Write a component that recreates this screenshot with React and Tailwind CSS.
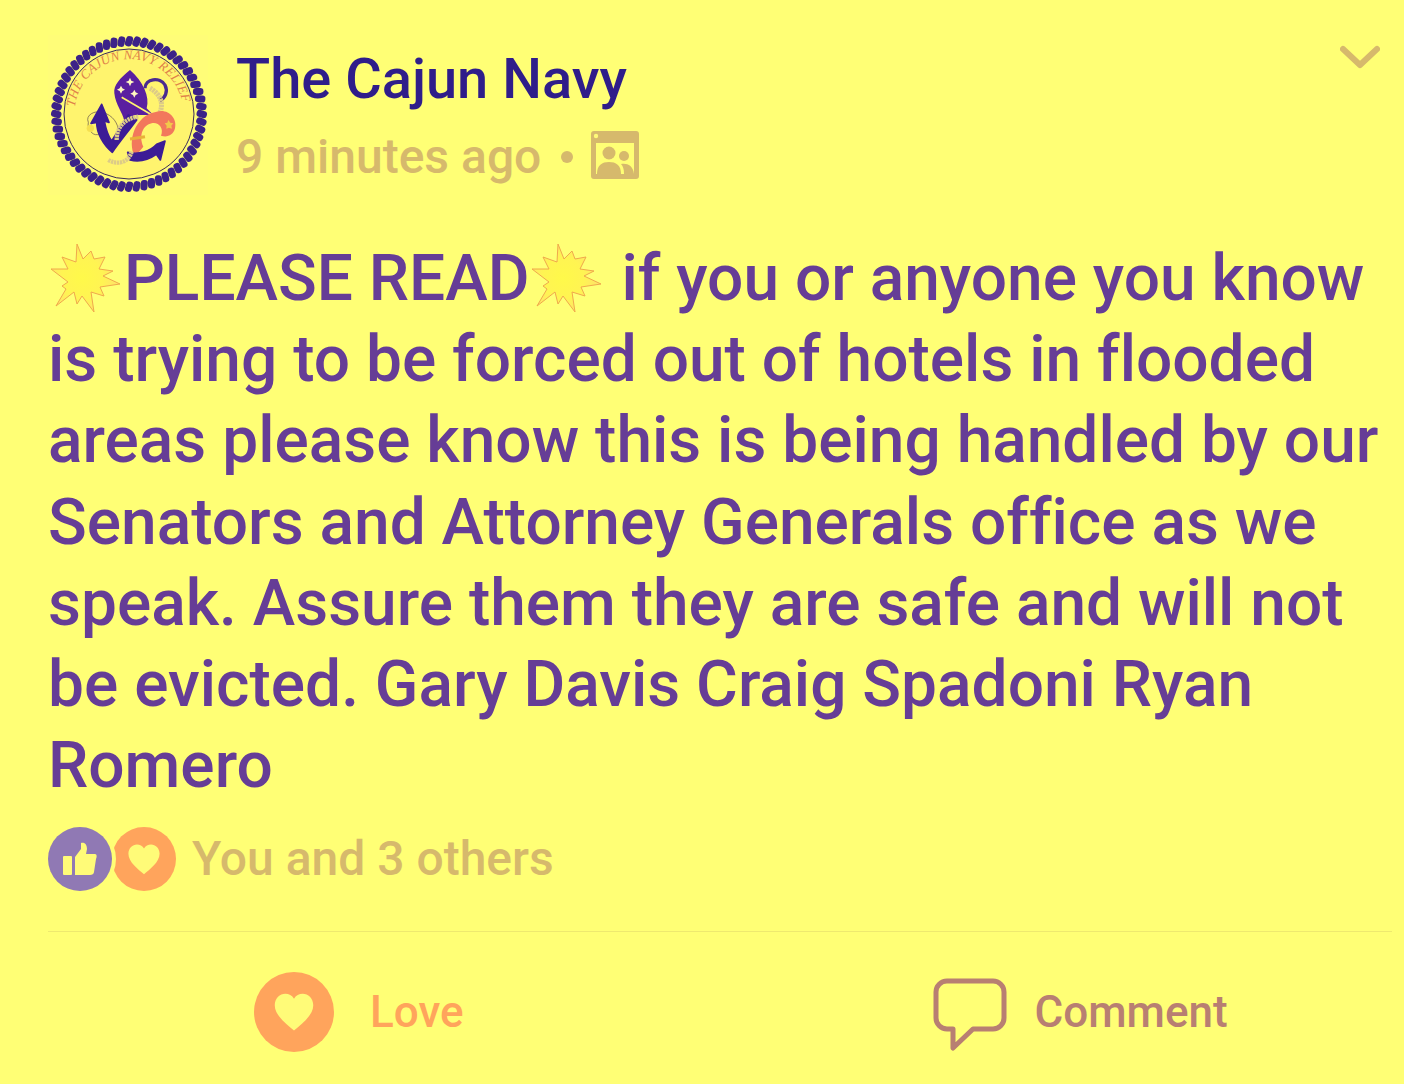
import React from 'react';

const BEADS = Array.from({ length: 60 }, (_, i) => i * 6);

function Logo() {
  return (
    <svg viewBox="0 0 160 160" className="w-[160px] h-[160px] shrink-0">
      <rect width="160" height="160" fill="#fffd78" />
      {BEADS.map((a) => (
        <rect key={a} x="77.5" y="1" width="7" height="10.5" rx="3.2" transform={`rotate(${a} 81 79) rotate(18 81 6.2)`} fill="#3c2288" />
      ))}
      <circle cx="81" cy="79" r="65" fill="#fff46e" stroke="#3a2a5a" strokeWidth="1" />
      <defs>
        <path id="logoArc" d="M 27 86 A 54.5 54.5 0 1 1 135 86" />
      </defs>
      <text fontFamily="'Liberation Serif', serif" fontStyle="italic" fontSize="13" fill="#e0824a" letterSpacing="0.2">
        <textPath href="#logoArc" startOffset="14">THE CAJUN NAVY RELIEF</textPath>
      </text>
      <g transform="translate(37 30) scale(0.3333)">
        <path d="M10 172 C0 150 30 135 52 142 C85 150 100 178 100 198" fill="none" stroke="#5a4a4a" strokeWidth="2" />
        <path d="M10 172 C5 195 28 218 44 206" fill="none" stroke="#5a4a4a" strokeWidth="2" />
        <circle cx="16" cy="190" r="11" fill="#f5e050" />
        <path d="M135 15 C105 40 85 60 88 85 C92 120 112 140 118 168 L150 150 L205 150 L185 130 C195 95 175 50 135 15 Z" fill="#5a1fa0" />
        <path d="M180 70 C180 40 225 35 240 60 C250 80 240 100 225 106" fill="none" stroke="#4a2a90" strokeWidth="10" />
        <path d="M195 70 C215 80 240 105 225 142" fill="none" stroke="#dccb88" strokeWidth="15" strokeDasharray="7 2" />
        <path d="M110 97 L228 166" stroke="#fff46e" strokeWidth="5" />
        <path d="M215 140 C250 130 278 160 270 190 C265 212 245 218 228 212 C238 190 220 170 200 175 C175 180 160 210 175 245 L150 275 C125 230 150 150 215 140 Z" fill="#f2785c" />
        <g fill="#3c1c96" stroke="#3c1c96" strokeWidth="5" strokeLinejoin="round">
          <path d="M50 118 L18 175 L35 172 C35 205 55 240 82 262 C100 235 125 205 155 165 L130 150 L80 228 C70 215 62 190 58 168 L72 172 Z" />
          <path d="M240 228 L226 285 L214 268 C190 285 165 292 135 285 L128 262 C160 270 195 260 215 238 Z" />
        </g>
        <path d="M70 285 C95 300 130 295 140 260" fill="none" stroke="#dccb88" strokeWidth="13" strokeDasharray="7 2" />
        <path d="M95 225 C95 185 120 160 160 155" fill="none" stroke="#dccb88" strokeWidth="13" strokeDasharray="7 2" />
        <path d="M135 222 L180 215" stroke="#e8b03a" strokeWidth="9" />
        <path d="M250 165 l6 8 l9 2 l-6 7 l2 9 l-9 -3 l-8 3 l1 -9 l-6 -7 l8 -2 z" fill="#f2c84a" />
        <g fill="#fff8c0">
          <path d="M135 38 l4 9 l9 4 l-9 4 l-4 9 l-4 -9 l-9 -4 l9 -4 z" />
          <path d="M108 62 l4 8 l8 4 l-8 4 l-4 8 l-4 -8 l-8 -4 l8 -4 z" />
          <path d="M148 74 l4 8 l8 4 l-8 4 l-4 8 l-4 -8 l-8 -4 l8 -4 z" />
        </g>
      </g>
    </svg>
  );
}

function PeopleIcon() {
  return (
    <svg viewBox="0 0 48 48" className="w-[48px] h-[48px] ml-[18px] mb-[4px]">
      <path fillRule="evenodd" fill="#d6b96c" d="M3 0 H45 A3 3 0 0 1 48 3 V45 A3 3 0 0 1 45 48 H3 A3 3 0 0 1 0 45 V3 A3 3 0 0 1 3 0 Z M5 12 V43 H43 V12 Z" />
      <circle cx="5" cy="5" r="2.2" fill="#fffb78" />
      <circle cx="18" cy="22" r="6.5" fill="#d6b96c" />
      <circle cx="33" cy="25" r="5" fill="#d6b96c" />
      <path d="M6 43 C6 34 11 31 18 31 C25 31 30 34 30 43 Z" fill="#d6b96c" />
      <path d="M30 33 C36 32 42 34 43 43 H33 C33 38 32 35 30 33 Z" fill="#d6b96c" />
    </svg>
  );
}

const STAR = '26,0 32,15 40,7 43,15 54,13 48,25 62,27 52,32 69,40 49,43 53,52 40,48 43,68 31,52 26,60 23,48 5,62 15,45 11,42 17,38 0,25 17,25 11,13 25,18';

function Burst({ id }) {
  return (
    <svg viewBox="-3 0 76 70" className="inline-block w-[76px] h-[70px] align-[-14px]">
      <defs>
        <radialGradient id={id} cx="45%" cy="50%" r="50%">
          <stop offset="0%" stopColor="#fff94a" />
          <stop offset="60%" stopColor="#fff452" />
          <stop offset="100%" stopColor="#ffe466" />
        </radialGradient>
      </defs>
      <polygon points={STAR} fill={`url(#${id})`} stroke="#f0a84c" strokeWidth="1" strokeLinejoin="miter" />
    </svg>
  );
}

function Heart({ className }) {
  return (
    <svg viewBox="0 0 24 24" className={className} fill="#fffb78">
      <path d="M12 22 C8 18.5 1 13.5 1 7.5 C1 3.5 4 1 7 1 C9 1 11 2 12 3.8 C13 2 15 1 17 1 C20 1 23 3.5 23 7.5 C23 13.5 16 18.5 12 22 Z" />
    </svg>
  );
}

export default function App() {
  return (
    <div className="w-[1404px] h-[1084px] overflow-hidden bg-[#ffff75] font-['Roboto',sans-serif] [font-variant-ligatures:none]">
      <div className="flex pl-[48px] pr-[24px] pt-[35px]">
        <Logo />
        <div className="ml-[28px] pt-[9px]">
          <div className="text-[56px] leading-[70px] font-medium text-[#2f1d8a]">The Cajun Navy</div>
          <div className="flex items-center mt-[8px] text-[48px] leading-[70px] font-medium text-[#d6b96c]">
            <span>9 minutes ago</span>
            <span className="ml-[20px] w-[12px] h-[12px] rounded-full bg-[#d6b96c]" />
            <PeopleIcon />
          </div>
        </div>
        <svg viewBox="0 0 40 24" className="ml-auto mt-[10px] w-[40px] h-[24px]" fill="none" stroke="#d6b96c" strokeWidth="6" strokeLinecap="round" strokeLinejoin="round">
          <path d="M3 4 L20 20 L37 4" />
        </svg>
      </div>

      <p className="mt-[43px] pl-[48px] pr-[12px] text-[64px] leading-[81.2px] font-medium text-[#663d96]">
        <Burst id="burstA" />PLEASE READ<Burst id="burstB" /> if you or anyone you know is trying to be forced out of hotels in flooded areas please know this is being handled by our Senators and Attorney Generals office as we speak. Assure them they are safe and will not be evicted. Gary Davis Craig Spadoni Ryan Romero
      </p>

      <div className="flex items-center mt-[21px] pl-[48px]">
        <div className="relative z-10 w-[64px] h-[64px] rounded-full bg-[#9079b4] ring-[4px] ring-[#ffff75] flex items-center justify-center">
          <svg viewBox="0 0 34 34" className="w-[34px] h-[34px]" fill="#fffb78">
            <rect x="0" y="14" width="9" height="19" rx="1" />
            <path d="M12 15 L18 7 V1 C22 0 24 3 24 7 L23 12 H32 C34 12 34 15 33 17 L31 30 C31 32 29 33 27 33 H12 Z" />
          </svg>
        </div>
        <div className="w-[64px] h-[64px] rounded-full bg-[#ffa45c] flex items-center justify-center">
          <Heart className="w-[36px] h-[34px] mt-[2px]" />
        </div>
        <span className="ml-[16px] text-[48px] leading-[64px] font-medium text-[#d6b96c]">You and 3 others</span>
      </div>

      <div className="ml-[48px] mr-[12px] mt-[40px] h-px bg-[#eee96f]" />

      <div className="flex items-center mt-[40px] pl-[254px]">
        <div className="w-[80px] h-[80px] rounded-full bg-[#ffa45c] flex items-center justify-center">
          <Heart className="w-[48px] h-[42px] mt-[2px]" />
        </div>
        <span className="ml-[36px] text-[44px] leading-[80px] font-medium text-[#ffa45c]">Love</span>
        <svg viewBox="0 0 74 74" className="ml-[469px] mt-[6px] w-[74px] h-[74px]" fill="none" stroke="#b87f72" strokeWidth="5" strokeLinejoin="round" strokeLinecap="round">
          <path d="M14 3 H60 A11 11 0 0 1 71 14 V40 A11 11 0 0 1 60 51 H40 L20 70 V51 H14 A11 11 0 0 1 3 40 V14 A11 11 0 0 1 14 3 Z" />
        </svg>
        <span className="ml-[28px] text-[44px] leading-[80px] font-medium text-[#b87f72]">Comment</span>
      </div>
    </div>
  );
}
